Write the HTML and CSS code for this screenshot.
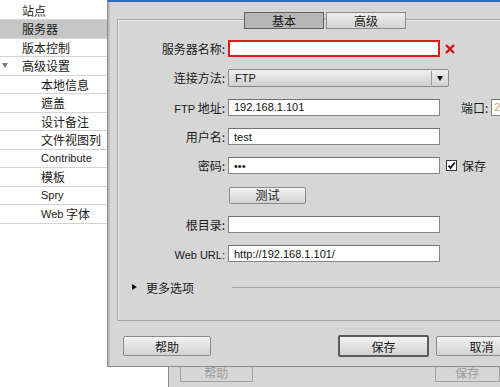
FILE: index.html
```html
<!DOCTYPE html>
<html lang="zh-CN">
<head>
    <meta charset="UTF-8">
    <title>站点设置</title>
    <link rel="stylesheet" href="styles.css">
</head>
<body>
    <div class="main">
        <!-- Lista de categorias -->
        <ul class="sidebar">
            <li>站点</li>
            <li class="selected">服务器</li>
            <li>版本控制</li>
            <li class="head"><span class="caret"></span>高级设置</li>
            <li class="sub">本地信息</li>
            <li class="sub">遮盖</li>
            <li class="sub">设计备注</li>
            <li class="sub">文件视图列</li>
            <li class="sub"><span class="en">Contribute</span></li>
            <li class="sub">模板</li>
            <li class="sub"><span class="en">Spry</span></li>
            <li class="sub"><span class="en">Web</span>&nbsp;字体</li>
        </ul>

        <div class="dialog">
            <div class="tabs">
                <div class="tab active">基本</div>
                <div class="tab">高级</div>
            </div>

            <div class="group">
                <div class="form">
                    <label class="label">服务器名称:</label>
                    <input class="input error" type="text" value="">
                    <div class="extra">
                        <svg class="cross" width="10" height="10" viewBox="0 0 10 10">
                            <path d="M1 1 L9 9 M9 1 L1 9" stroke="#d41414" stroke-width="2.4"/>
                        </svg>
                    </div>

                    <label class="label">连接方法:</label>
                    <div class="select">
                        <span class="select-text en">FTP</span>
                        <span class="select-arrow"></span>
                    </div>
                    <div class="extra"></div>

                    <label class="label"><span class="en">FTP</span> 地址:</label>
                    <input class="input" type="text" value="192.168.1.101">
                    <div class="extra">
                        <span class="port-label">端口:</span>
                        <input class="input port" type="text" value="21">
                    </div>

                    <label class="label">用户名:</label>
                    <input class="input" type="text" value="test">
                    <div class="extra"></div>

                    <label class="label">密码:</label>
                    <input class="input" type="password" value="abc">
                    <div class="extra">
                        <svg class="check" width="11" height="11" viewBox="0 0 11 11">
                            <rect x="0.5" y="0.5" width="10" height="10" fill="#fff" stroke="#3a3a3a"/>
                            <path d="M2.5 5.5 L4.5 8 L8.8 2.5" fill="none" stroke="#111" stroke-width="1.8"/>
                        </svg>
                        <span>保存</span>
                    </div>

                    <span></span>
                    <div><button class="btn test">测试</button></div>
                    <div class="extra"></div>

                    <label class="label">根目录:</label>
                    <input class="input" type="text" value="">
                    <div class="extra"></div>

                    <label class="label"><span class="en">Web URL:</span></label>
                    <input class="input" type="text" value="http://192.168.1.101/">
                    <div class="extra"></div>
                </div>

                <div class="more">
                    <span class="more-arrow"></span>
                    <span class="more-text">更多选项</span>
                    <span class="rule"></span>
                </div>
            </div>

            <div class="actions">
                <button class="btn help">帮助</button>
                <button class="btn default">保存</button>
                <button class="btn cancel">取消</button>
            </div>
        </div>
    </div>

    <!-- Janela de trás -->
    <div class="backwin">
        <div class="ghost help">帮助</div>
        <div class="ghost save">保存</div>
    </div>
</body>
</html>
```

FILE: styles.css
```css
* {
    margin: 0;
    padding: 0;
    box-sizing: border-box;
}

body {
    width: 500px;
    height: 387px;
    overflow: hidden;
    background: #fff;
    font-family: "Noto Sans CJK SC", sans-serif;
    font-size: 12px;
    color: #1a1a1a;
}

.en {
    font-family: "Liberation Sans", "Noto Sans CJK SC", sans-serif;
    font-size: 11px;
}

.main {
    display: flex;
    height: 367px;
}

/* Barra lateral */
.sidebar {
    list-style: none;
    width: 107px;
    flex: none;
    padding-top: 1.5px;
}

.sidebar li {
    display: flex;
    align-items: center;
    height: 18.5px;
    padding-left: 22px;
    border-bottom: 1px solid #d4d4d4;
    white-space: nowrap;
}

.sidebar li.selected {
    background: #c6c6c6;
}

.sidebar li.sub {
    padding-left: 41px;
}

.sidebar li.head {
    padding-left: 2px;
}

.caret {
    width: 0;
    height: 0;
    border-top: 5px solid #7a7a7a;
    border-left: 3px solid transparent;
    border-right: 3px solid transparent;
    margin-right: 14px;
}

/* Dialogo */
.dialog {
    flex: none;
    width: 420px;
    background: #d6d6d6;
    border-top: 2px solid #2c6db4;
    border-left: 1px solid #8a8a8a;
    border-bottom: 1px solid #8a8a8a;
    box-shadow: inset 2px 0 0 #bdbdbd;
    padding: 10px 0 0 9px;
}

.tabs {
    display: flex;
    gap: 2px;
    margin-left: 127px;
    height: 17px;
    position: relative;
    z-index: 1;
}

.tab {
    width: 80px;
    height: 17px;
    line-height: 15px;
    text-align: center;
    border: 1px solid #8a8a8a;
    background: linear-gradient(#eeeeee, #d3d3d3);
}

.tab.active {
    background: #b6b6b6;
    border-color: #5e5e5e;
}

.group {
    margin-top: -10px;
    width: 400px;
    height: 302px;
    border: 1px solid #a6a6a6;
    box-shadow: inset 1px 1px 0 #eeeeee;
    padding-top: 14px;
}

.form {
    display: grid;
    grid-template-columns: 107px 212px auto;
    column-gap: 3px;
    grid-auto-rows: 29.3px;
    align-items: center;
}

.label {
    text-align: right;
    white-space: nowrap;
}

.input {
    display: block;
    width: 212px;
    height: 17px;
    border: 1px solid #868686;
    border-top-color: #707070;
    background: #fff;
    padding: 0 5px;
    font-family: "Liberation Sans", sans-serif;
    font-size: 11px;
    color: #111;
    outline: none;
}

.input.error {
    border: 2px solid #e01b1b;
}

.extra {
    display: flex;
    align-items: center;
    margin-left: 2px;
    white-space: nowrap;
}

.cross {
    display: block;
}

.port-label {
    margin-left: 16px;
}

.input.port {
    width: 30px;
    margin-left: 3px;
    padding: 0 2px;
    color: #c9a060;
}

.check {
    display: block;
    margin-right: 5px;
    margin-left: 1px;
}

.select {
    display: flex;
    align-items: center;
    width: 221px;
    height: 18px;
    border: 1px solid #8a8a8a;
    border-radius: 2px;
    background: linear-gradient(#f1f1f1, #d0d0d0);
}

.select-text {
    flex: 1;
    padding-left: 6px;
}

.select-arrow {
    width: 17px;
    height: 14px;
    border-left: 1px solid #9a9a9a;
    position: relative;
}

.select-arrow::after {
    content: "";
    position: absolute;
    left: 5px;
    top: 5px;
    border-top: 5px solid #111;
    border-left: 3.5px solid transparent;
    border-right: 3.5px solid transparent;
}

.btn {
    display: block;
    height: 20px;
    border: 1px solid #8a8a8a;
    border-radius: 2px;
    background: linear-gradient(#f3f3f3, #d2d2d2);
    font-family: "Noto Sans CJK SC", sans-serif;
    font-size: 12px;
    color: #1a1a1a;
    line-height: 17px;
    text-align: center;
}

.btn.test {
    width: 77px;
    height: 17px;
    line-height: 14px;
    margin-left: 1px;
}

.more {
    display: flex;
    align-items: center;
    height: 20px;
    margin-top: 9px;
    padding-left: 14px;
}

.more-arrow {
    width: 0;
    height: 0;
    border-left: 5px solid #111;
    border-top: 3.5px solid transparent;
    border-bottom: 3.5px solid transparent;
}

.more-text {
    margin-left: 9px;
}

.rule {
    flex: 1;
    margin-left: 38px;
    border-top: 1px solid #a6a6a6;
}

.actions {
    display: flex;
    align-items: center;
    height: 22px;
    margin-top: 14px;
    padding-left: 6px;
}

.btn.help {
    width: 89px;
}

.btn.default {
    width: 92px;
    height: 22px;
    border: 2px solid #5a5a5a;
    margin-left: 127px;
}

.btn.cancel {
    width: 92px;
    margin-left: 7px;
}

/* Janela de trás */
.backwin {
    display: flex;
    height: 20px;
    margin-left: 168px;
    background: #d6d6d6;
    border-left: 1px solid #8a8a8a;
}

.ghost {
    height: 15px;
    border: 1px solid #a2a2a2;
    border-top: none;
    color: #9c9c9c;
    text-align: center;
    line-height: 12px;
}

.ghost.help {
    width: 89px;
    margin-left: 11px;
}

.ghost.save {
    width: 80px;
    margin-left: 182px;
}
```
